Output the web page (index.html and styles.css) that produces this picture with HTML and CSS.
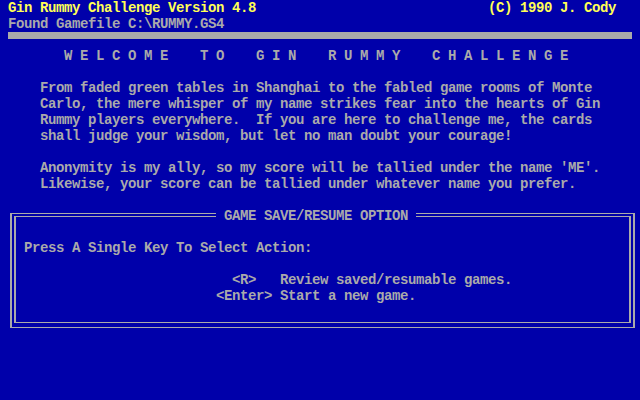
FILE: index.html
```html
<!DOCTYPE html>
<html>
<head>
<meta charset="utf-8">
<link rel="stylesheet" href="styles.css">
</head>
<body>
<div class="screen">
  <div class="row header">
    <span class="yellow">Gin Rummy Challenge Version 4.8</span>
    <span class="yellow">(C) 1990 J. Cody</span>
  </div>
  <div class="row indent1">Found Gamefile C:\RUMMY.GS4</div>
  <div class="row barrow"><div class="bar"></div></div>
  <div class="row welcome">W E L C O M E    T O    G I N    R U M M Y    C H A L L E N G E</div>
  <div class="row"></div>
  <div class="para">
    <div class="row">From faded green tables in Shanghai to the fabled game rooms of Monte</div>
    <div class="row">Carlo, the mere whisper of my name strikes fear into the hearts of Gin</div>
    <div class="row">Rummy players everywhere.  If you are here to challenge me, the cards</div>
    <div class="row">shall judge your wisdom, but let no man doubt your courage!</div>
    <div class="row"></div>
    <div class="row">Anonymity is my ally, so my score will be tallied under the name 'ME'.</div>
    <div class="row">Likewise, your score can be tallied under whatever name you prefer.</div>
  </div>
  <div class="box">
    <div class="box-title">GAME SAVE/RESUME OPTION</div>
    <div class="box-inner">
      <div class="row">Press A Single Key To Select Action:</div>
      <div class="row"></div>
      <div class="row">                          &lt;R&gt;   Review saved/resumable games.</div>
      <div class="row">                        &lt;Enter&gt; Start a new game.</div>
    </div>
  </div>
</div>
</body>
</html>
```
FILE: styles.css
```css
html, body {
  margin: 0;
  padding: 0;
  background: #0000aa;
}
.screen {
  width: 640px;
  height: 400px;
  background: #0000aa;
  color: #aaaaaa;
  font-family: "Liberation Mono", "DejaVu Sans Mono", monospace;
  font-weight: bold;
  font-size: 14px;
  letter-spacing: -0.4px;
  overflow: hidden;
}
.row {
  height: 16px;
  line-height: 16.5px;
  white-space: pre;
}
.header {
  display: flex;
  justify-content: space-between;
  padding: 0 24px 0 8px;
}
.yellow {
  color: #ffff55;
}
.indent1 {
  padding-left: 8px;
}
.barrow {
  padding: 0 8px;
}
.bar {
  height: 7px;
  background: #aaaaaa;
}
.welcome {
  padding-left: 64px;
}
.para {
  padding-left: 40px;
  padding-bottom: 16px;
}
.box {
  position: relative;
  margin: 5px 0 0 10px;
  width: 617px;
  height: 110px;
  border-top: 1px solid #aaaaaa;
  border-bottom: 1px solid #aaaaaa;
  border-left: 2px solid #aaaaaa;
  border-right: 2px solid #aaaaaa;
  padding: 2px 2px 1px 2px;
}
.box-title {
  position: absolute;
  left: 204px;
  top: -6px;
  height: 16px;
  line-height: 16.5px;
  padding: 0 8px;
  background: #0000aa;
  white-space: pre;
}
.box-inner {
  box-sizing: border-box;
  height: 107px;
  border-top: 1px solid #aaaaaa;
  border-bottom: 1px solid #aaaaaa;
  border-left: 2px solid #aaaaaa;
  border-right: 2px solid #aaaaaa;
  padding: 23px 0 0 8px;
}
```
